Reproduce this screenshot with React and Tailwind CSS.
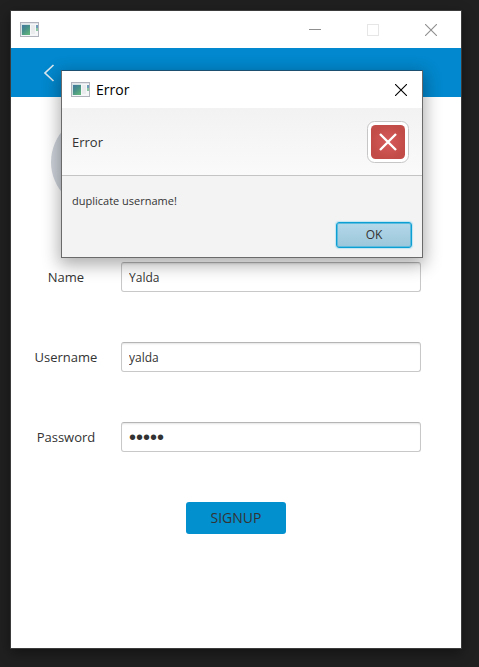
import { useId } from "react";

function AppIcon() {
  const id = useId();
  return (
    <svg width="19" height="15" viewBox="0 0 19 15" className="shrink-0" aria-hidden="true">
      <defs>
        <linearGradient id={id} x1="0" y1="0" x2="0.7" y2="1">
          <stop offset="0" stopColor="#4377a0" />
          <stop offset="0.5" stopColor="#489089" />
          <stop offset="1" stopColor="#5fb27c" />
        </linearGradient>
      </defs>
      <rect x="0.5" y="0.5" width="18" height="14" fill="#f4f6f7" stroke="#b0b3bb" />
      <rect x="1" y="1" width="17" height="1" fill="#e3e5ea" />
      <rect x="1" y="2" width="9" height="11" fill="#d3e3e2" />
      <rect x="2" y="3" width="8" height="10" fill={`url(#${id})`} />
      <rect x="11" y="3" width="4" height="9" fill="#e9ebed" />
      <rect x="16" y="3" width="2" height="3" fill="#6f9cb8" />
      <rect x="16" y="6" width="2" height="3" fill="#8cc8a2" />
    </svg>
  );
}

function CloseGlyph() {
  return (
    <svg width="12" height="12" viewBox="0 0 12 12" fill="none" stroke="currentColor" aria-hidden="true">
      <path d="M0 0L12 12M12 0L0 12" strokeWidth="1.1" />
    </svg>
  );
}

function Field({ id, label, type = "text", value }) {
  const textStyle =
    type === "password" ? "font-['Liberation_Sans',sans-serif] text-[20px]" : "text-[12px]";
  return (
    <div className="flex h-[30px] items-center">
      <label htmlFor={id} className="w-[110px] shrink-0 text-center text-[13px] leading-5">
        {label}
      </label>
      <input
        id={id}
        type={type}
        defaultValue={value}
        className={`h-[30px] min-w-0 flex-1 rounded-[3px] border border-[#c8c8c8] border-t-[#b5b5b5] bg-white px-[7px] shadow-[inset_0_2px_2px_-1px_#e4e4e4] outline-none ${textStyle}`}
      />
    </div>
  );
}

function ErrorDialog() {
  return (
    <div
      role="dialog"
      aria-labelledby="dialog-title"
      className="absolute top-[70px] right-14 left-[61px] border border-[#6a6a6a] border-t-[#1d4f70] bg-[#f3f3f3] shadow-[0_5px_16px_2px_rgba(0,0,0,0.32)]"
    >
      <div className="flex h-[37px] items-center bg-white pr-[15px] pl-[9px] text-black">
        <AppIcon />
        <h2 id="dialog-title" className="ml-1.5 flex-1 text-[14px] leading-5">
          Error
        </h2>
        <button type="button" aria-label="Close">
          <CloseGlyph />
        </button>
      </div>
      <div className="flex h-[68px] items-center justify-between border-b border-[#c4c4c4] bg-linear-to-b from-[#f2f2f2] to-[#fafafa] pr-[13px] pl-2.5">
        <p className="text-[13px] leading-5">Error</p>
        <svg width="42" height="42" viewBox="0 0 42 42" aria-hidden="true">
          <defs>
            <radialGradient id="error-red">
              <stop offset="0" stopColor="#d65a5a" />
              <stop offset="1" stopColor="#c24c48" />
            </radialGradient>
          </defs>
          <rect x="0.5" y="0.5" width="41" height="41" rx="7" fill="#fff" stroke="#c6c6c6" />
          <rect x="4" y="4" width="34" height="34" rx="4.5" fill="url(#error-red)" />
          <path d="M13 13L29 29M29 13L13 29" stroke="#fff" strokeWidth="2.4" />
        </svg>
      </div>
      <div className="px-2.5 pt-4 pb-[9px]">
        <p className="text-[11px] leading-[18px]">duplicate username!</p>
        <div className="mt-3 flex justify-end">
          <button
            type="button"
            className="h-[26px] w-[76px] rounded-[3px] border border-[#0b9fd3] bg-linear-to-b from-[#b3d9ea] to-[#9cc6da] text-[12px] leading-5 shadow-[0_0_1px_1px_#bfe4f2,inset_0_0_0_1px_#5dbbdd]"
          >
            OK
          </button>
        </div>
      </div>
    </div>
  );
}

export default function App() {
  return (
    <div className="relative flex min-h-screen flex-col bg-[#202020] pt-2.5 pr-[17px] pb-[18px] pl-2.5 font-['Open_Sans','Noto_Sans',sans-serif] text-[#333]">
      <main className="flex flex-1 flex-col border border-[#3b3b3b] bg-white shadow-[0_4px_12px_rgba(0,0,0,0.4)]">
        <div className="flex h-[37px] items-center justify-between pr-6 pl-[9px] text-[#8f8f8f]">
          <AppIcon />
          <div className="flex items-center gap-[46px]">
            <button type="button" aria-label="Minimize" className="flex size-3 items-center">
              <span className="h-px w-3 bg-[#8f8f8f]" />
            </button>
            <button type="button" aria-label="Maximize" disabled className="size-3 border border-[#e6e6e6]" />
            <button type="button" aria-label="Close" className="size-3">
              <CloseGlyph />
            </button>
          </div>
        </div>
        <header className="flex h-[49px] items-center bg-[#0288ce] pl-8">
          <button type="button" aria-label="Back">
            <svg width="12" height="18" viewBox="0 0 12 18" fill="none" stroke="#dbe7ee" strokeWidth="1.7" aria-hidden="true">
              <path d="M10.5 1L2 9L10.5 17" />
            </svg>
          </button>
        </header>
        <form className="flex flex-col pt-[17px] pr-10">
          <div className="ml-10 size-24 rounded-full bg-[#ced3db]" />
          <div className="mt-[52px] flex flex-col gap-[50px]">
            <Field id="name" label="Name" value="Yalda" />
            <Field id="username" label="Username" value="yalda" />
            <Field id="password" label="Password" type="password" value="12345" />
          </div>
          <div className="-mr-10 mt-[50px] flex justify-center">
            <button type="button" className="h-8 w-[100px] rounded-[3px] bg-[#0390cf] text-[14px] leading-5">
              SIGNUP
            </button>
          </div>
        </form>
      </main>
      <ErrorDialog />
    </div>
  );
}
